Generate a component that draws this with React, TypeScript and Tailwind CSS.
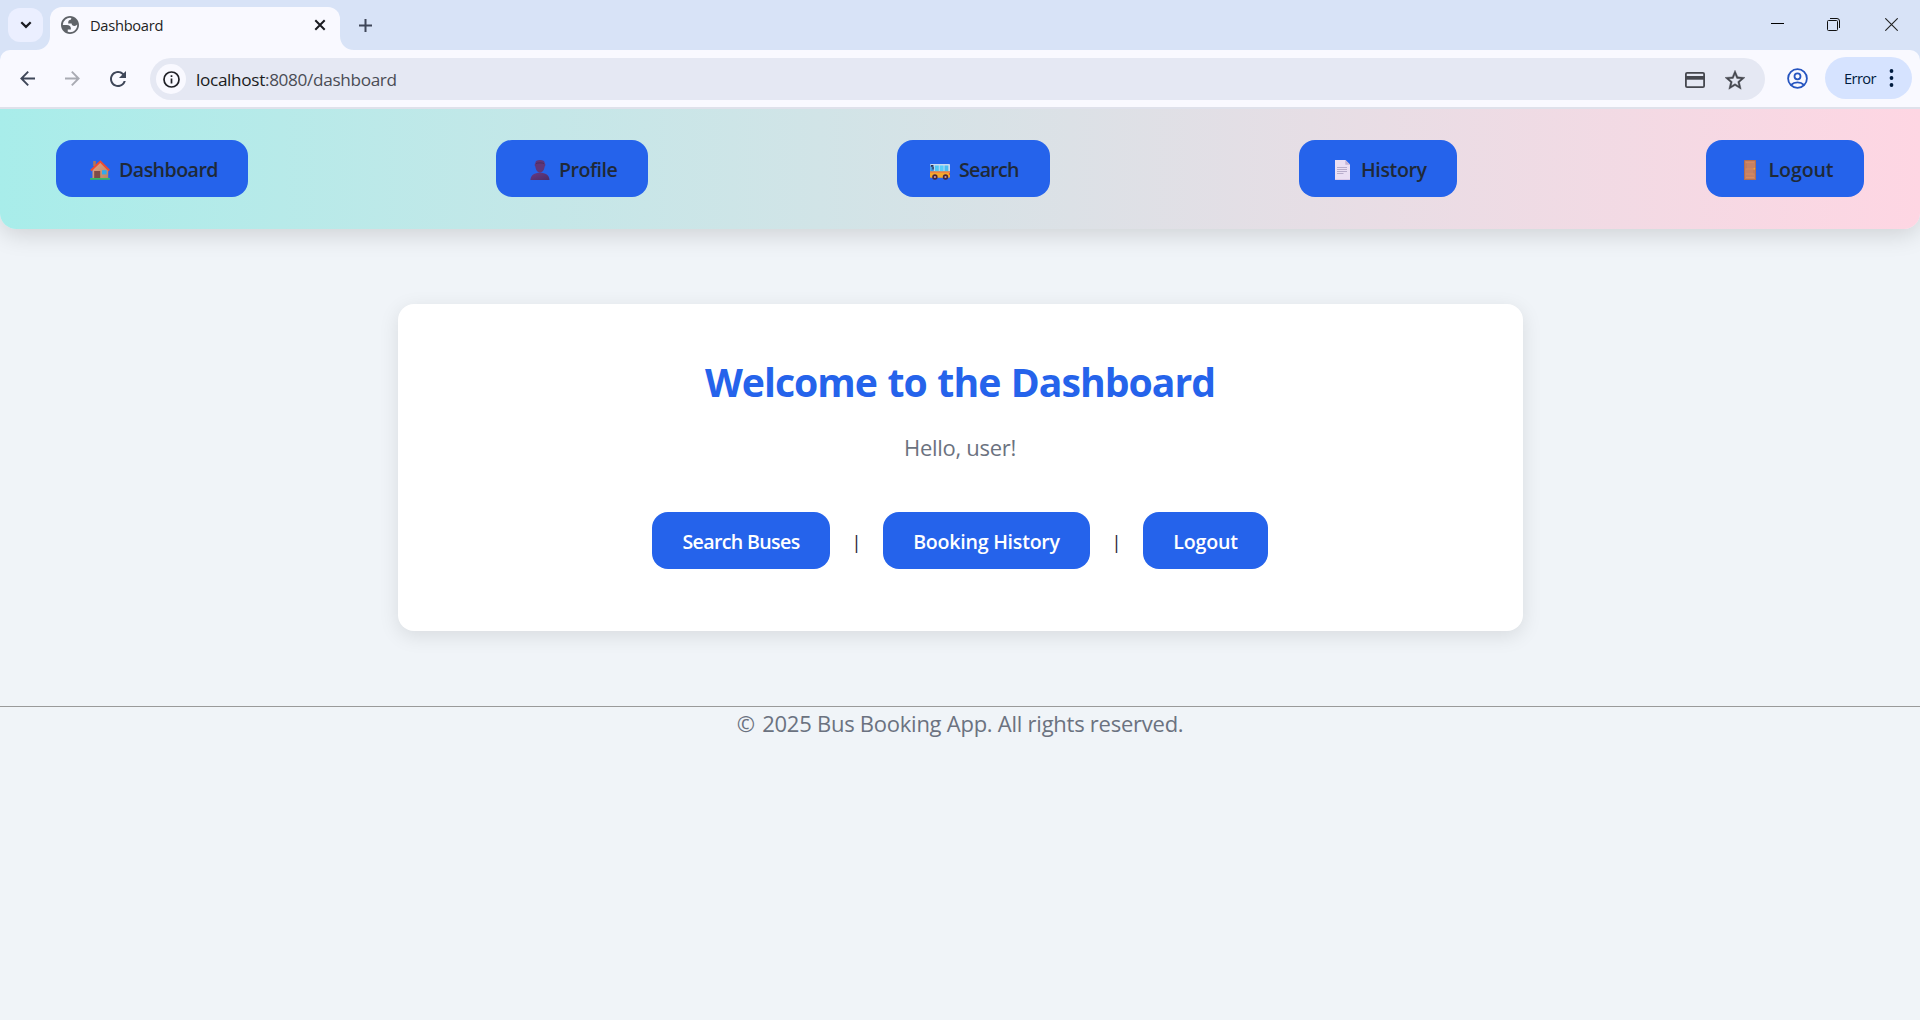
import type { ReactNode } from 'react';

const HouseIcon = () => (
  <svg width="20" height="20" viewBox="0 0 20 20">
    <defs>
      <linearGradient id="wall" x1="0" y1="0" x2="1" y2="1">
        <stop offset="0" stopColor="#e3a489" />
        <stop offset="1" stopColor="#b98560" />
      </linearGradient>
    </defs>
    <rect x="3.2" y="1" width="2.6" height="5" fill="#b0765a" />
    <path d="M2.5 9.5 10.3 2l7.9 7.8V18.6H2.5z" fill="url(#wall)" />
    <rect x="4.2" y="11" width="6" height="7.6" fill="#7d4c48" />
    <rect x="12" y="10.2" width="4.6" height="4.2" fill="#2fa9ee" />
    <path d="M0.9 10.5 10.3 1.5l9 9" fill="none" stroke="#f04b2f" strokeWidth="1.9" />
    <rect x="0" y="18" width="20" height="1.8" rx="0.6" fill="#35b862" />
  </svg>
);

const PersonIcon = () => (
  <svg width="20" height="20" viewBox="0 0 20 20">
    <defs>
      <linearGradient id="bust" x1="0" y1="0" x2="1" y2="1">
        <stop offset="0" stopColor="#673a83" />
        <stop offset="1" stopColor="#492b68" />
      </linearGradient>
    </defs>
    <path d="M5.3 3.6C5.4.9 7 .1 10 .1s4.7.8 4.8 3.5c.8.5.7 2.5-.2 3-.2 3.3-2.2 6.1-4.6 6.1S5.600 9.900 5.400 6.600c-.9-.5-.9-2.500-.1-3z" fill="#5f3679" />
    <path d="M.4 20c.3-4.700 4-7.200 9.600-7.200s9.200 2.500 9.500 7.200z" fill="url(#bust)" />
    <path d="M6 3.600c1.200-1 6.800-1 8 0" fill="none" stroke="#472b5f" strokeWidth="0.9" />
  </svg>
);

const BusIcon = () => (
  <svg width="20" height="20" viewBox="0 0 20 20">
    <path d="M1 3.900h18.200q.8 0 .8.800v6.500H0V4.900q0-1 1-1z" fill="#c9d9ee" />
    <rect x="0.200" y="5.500" width="3.600" height="6.500" fill="#3c9ae6" />
    <rect x="4.800" y="5.500" width="4" height="6" fill="#4fc6f7" />
    <rect x="9.700" y="5.500" width="3.900" height="6" fill="#57cdfb" />
    <rect x="14.500" y="5.500" width="3.800" height="6" fill="#4bbdf2" />
    <path d="M0 11.500h20V17q0 .800-.800.800H.800Q0 17.800 0 17z" fill="#f5a82d" />
    <path d="M0 11.500h20v1.400H0z" fill="#f38345" />
    <path d="M.900 4.900h2.400v1.800H.900zM2.400 7h1.300v2.600H2.400z" fill="#343352" />
    <circle cx="4.900" cy="17" r="2.700" fill="#45263f" />
    <circle cx="15.500" cy="17" r="2.700" fill="#45263f" />
    <circle cx="4.900" cy="17" r="1.100" fill="#b99bb8" />
    <circle cx="15.500" cy="17" r="1.100" fill="#b99bb8" />
    <rect x="19" y="13.200" width="1" height="1.600" fill="#d63d3d" />
  </svg>
);

const PageIcon = () => (
  <svg width="20" height="20" viewBox="0 0 20 20">
    <path d="M3 0h10.500L18 4.500V20H3z" fill="#eadff3" />
    <path d="M13.300 0 18 4.700h-4.700z" fill="#c4b3d3" />
    <path d="M5 7.500h10M5 9.500h10M5 11.500h10M5 13.500h6.500" stroke="#ab9fc0" strokeWidth="0.800" />
    <path d="M3 19.600h15" stroke="#d3c1e2" strokeWidth="0.800" />
  </svg>
);

const DoorIcon = () => (
  <svg width="20" height="20" viewBox="0 0 20 20">
    <rect x="4" y="0" width="12" height="20" rx="0.600" fill="#b46f50" />
    <rect x="5" y="1" width="10" height="18" fill="#c68163" />
    <path d="M6 2.300h8M6 9h7.500M6 14h8M6 17.500h8" stroke="#dd8d5b" strokeWidth="0.900" />
    <path d="M6 3.200v5M14 10v3.500" stroke="#b8734f" strokeWidth="0.600" />
    <circle cx="14.300" cy="8.700" r="0.900" fill="#f6a72b" />
  </svg>
);

const GlobeIcon = () => (
  <svg width="18" height="18" viewBox="2 2 20 20" fill="#5f6368" fillRule="evenodd">
    <path d="M12 2C6.480 2 2 6.480 2 12s4.480 10 10 10 10-4.480 10-10S17.520 2 12 2zM4 12h4.400c3.407.022 4.922 1.730 4.543 5.127H9.488v2.470a8.004 8.004 0 0 0 10.498-8.083C19.327 12.504 18.332 13 17 13c-2.137 0-3.206-.916-3.206-2.750h-3.748c-.274-2.728.683-4.092 2.870-4.092 0-.975.327-1.597.811-1.970A8.004 8.004 0 0 0 4 12z" />
  </svg>
);

const navItems: { label: string; icon: ReactNode; box: string; text: string }[] = [
  { label: 'Dashboard', icon: <HouseIcon />, box: 'w-48 pl-[34px]', text: 'ml-[9px] tracking-[-0.55px]' },
  { label: 'Profile', icon: <PersonIcon />, box: '-ml-px w-38 pl-[34px]', text: 'ml-[9px] tracking-[-0.5px]' },
  { label: 'Search', icon: <BusIcon />, box: 'w-[153px] pl-[33px]', text: 'ml-[9px] tracking-[-0.7px]' },
  { label: 'History', icon: <PageIcon />, box: 'w-[158px] pl-[33px]', text: 'ml-[9px] tracking-[-0.38px]' },
  { label: 'Logout', icon: <DoorIcon />, box: 'w-[158px] pl-[34px]', text: 'ml-[8.5px] tracking-[-0.1px]' },
];

function TabStrip() {
  return (
    <div className="flex h-[50px] bg-[#d8e3f7]">
      <div className="ml-2 mt-2 flex h-[34px] w-[35px] items-center justify-center rounded-xl bg-[#ebefff]">
        <svg width="12" height="8" viewBox="0 0 12 8" fill="none" stroke="#1a1b21" strokeWidth="2.200">
          <path d="M1.300 1.200 6 5.900l4.700-4.700" />
        </svg>
      </div>
      <svg className="ml-[-7px] mt-auto" width="14" height="14" viewBox="0 0 14 14" fill="#f9f9ff">
        <path d="M14 0v14H0C8 14 14 8 14 0z" />
      </svg>
      <div className="mt-[7px] flex h-[43px] w-[290px] items-center rounded-t-xl bg-[#f9f9ff] pb-[7px] pl-[11px] pr-[14px]">
        <GlobeIcon />
        <span className="ml-[11px] text-[14.7px] tracking-[-0.3px] text-[#1f1f24]">Dashboard</span>
        <svg className="ml-auto" width="12" height="12" viewBox="0 0 12 12" fill="none" stroke="#1a1b21" strokeWidth="2">
          <path d="M1.300 1.300l9.400 9.400M10.700 1.300l-9.400 9.400" />
        </svg>
      </div>
      <svg className="mt-auto" width="14" height="14" viewBox="0 0 14 14" fill="#f9f9ff">
        <path d="M0 0v14h14C6 14 0 8 0 0z" />
      </svg>
      <svg className="ml-[5px] mt-[19px]" width="13" height="13" viewBox="0 0 13 13" stroke="#3f4759" strokeWidth="2">
        <path d="M6.500 0v13M0 6.500h13" />
      </svg>
      <div className="ml-auto mr-[22px] mt-[18px] flex h-[13px]">
        <svg width="13" height="13" viewBox="0 0 13 13" stroke="#000">
          <path d="M0 5.500h13" />
        </svg>
        <svg className="ml-[43px]" width="13" height="13" viewBox="0 0 13 13" fill="none" stroke="#111">
          <rect x="0.500" y="2.500" width="10" height="10" rx="1" />
          <path d="M3 .500h7a2.500 2.500 0 0 1 2.500 2.500v7" />
        </svg>
        <svg className="ml-[45px]" width="13" height="13" viewBox="0 0 13 13" stroke="#222" strokeWidth="1.100">
          <path d="M.300.300l12.400 12.400M12.700.300.300 12.700" />
        </svg>
      </div>
    </div>
  );
}

function Toolbar() {
  return (
    <div className="relative z-10 bg-[#d8e3f7]">
      <div className="flex h-[59px] items-start rounded-t-[10px] border-b-2 border-[#dfe1eb] bg-[#f9f9ff]">
        <div className="ml-5 mt-[21px] flex">
          <svg width="15" height="15" viewBox="0 0 15 15" fill="none" stroke="#3f4759" strokeWidth="1.900">
            <path d="M15 7.500H1.500M8.200.700 1.400 7.500l6.800 6.800" />
          </svg>
          <svg className="ml-[30px]" width="15" height="15" viewBox="0 0 15 15" fill="none" stroke="#a9abb3" strokeWidth="1.900">
            <path d="M0 7.500h13.500M6.800.700l6.800 6.800-6.800 6.800" />
          </svg>
          <svg className="ml-[30px]" width="16" height="16" viewBox="4 4 16 16" fill="#3f4759">
            <path d="M17.650 6.350A7.958 7.958 0 0 0 12 4c-4.420 0-7.990 3.580-7.990 8s3.570 8 7.990 8c3.730 0 6.840-2.550 7.730-6h-2.080A5.990 5.990 0 0 1 12 18c-3.310 0-6-2.690-6-6s2.690-6 6-6c1.660 0 3.140.690 4.220 1.780L13 11h7V4l-2.350 2.350z" />
          </svg>
        </div>
        <div className="ml-6 mt-2 flex h-[42px] w-[1615px] items-center rounded-full bg-[#e5e8f3] pl-1.5 pr-5">
          <div className="flex size-[30px] items-center justify-center rounded-full bg-[#f9f9ff]">
            <svg width="17" height="17" viewBox="0 0 17 17" fill="none" stroke="#1f2026" strokeWidth="1.700">
              <circle cx="8.500" cy="8.500" r="7.500" />
              <path d="M8.500 7.600v4.900M8.500 4.300v1.800" />
            </svg>
          </div>
          <span className="ml-[10px] pt-0.5 text-[17.2px] tracking-[-0.34px] text-[#4a4c55]">
            <span className="text-[#1a1b21]">localhost</span>:8080/dashboard
          </span>
          <svg className="ml-auto mt-[2px]" width="20" height="16" viewBox="0 0 20 16">
            <rect x="0.900" y="0.900" width="18.200" height="14.200" rx="1.200" fill="none" stroke="#45474e" strokeWidth="1.800" />
            <rect x="1" y="4" width="18" height="3.700" fill="#45474e" />
          </svg>
          <svg className="ml-5 mt-px" width="20" height="20" viewBox="2 2 20 19.500" fill="#45474e" stroke="#45474e" strokeWidth="0.400">
            <path d="M22 9.240l-7.190-.620L12 2 9.190 8.630 2 9.240l5.460 4.730L5.820 21 12 17.270 18.180 21l-1.630-7.030L22 9.240zM12 15.400l-3.760 2.270 1-4.280-3.320-2.880 4.380-.380L12 6.100l1.710 4.040 4.380.380-3.320 2.880 1 4.280L12 15.400z" />
          </svg>
        </div>
        <svg className="ml-[22px] mt-[18px]" width="21" height="21" viewBox="0 0 21 21" fill="none" stroke="#2655c0" strokeWidth="1.800">
          <circle cx="10.500" cy="10.500" r="9.400" />
          <circle cx="10.500" cy="8.300" r="3" />
          <path d="M4 17c1.700-1.700 4-2.600 6.500-2.600s4.800.900 6.500 2.600" />
        </svg>
        <div className="ml-[17px] mt-[7px] flex h-[42px] w-[87px] items-center rounded-full bg-[#d6e3ff] pl-[19px]">
          <span className="text-[14.7px] tracking-[-0.6px] text-[#001b3e]">Error</span>
          <svg className="ml-auto mr-[18px]" width="5" height="18" viewBox="0 0 5 18" fill="#001b3e">
            <circle cx="2.500" cy="2" r="1.900" />
            <circle cx="2.500" cy="9" r="1.900" />
            <circle cx="2.500" cy="16" r="1.900" />
          </svg>
        </div>
      </div>
    </div>
  );
}

function ActionButton({ box, children }: { box: string; children: ReactNode }) {
  return (
    <button className={`h-[57px] shrink-0 whitespace-nowrap rounded-2xl bg-[#2563eb] pt-[3px] text-center text-[19.6px] font-semibold text-white ${box}`}>
      {children}
    </button>
  );
}

const Separator = () => <span className="w-[53px] pt-[3px] text-center text-[19px] text-[#1f2937]">|</span>;

export default function App() {
  return (
    <div className="h-[1020px] w-[1920px] overflow-hidden bg-[#f0f4f8] font-['Open_Sans','Noto_Sans',sans-serif]">
      <TabStrip />
      <Toolbar />
      <nav className="flex h-[120px] items-start gap-[249px] rounded-b-2xl bg-linear-to-r from-[#a8edea] to-[#fed6e3] px-14 pt-[31px] shadow-[0_5px_25px_rgba(0,0,0,0.15)]">
        {navItems.map((item) => (
          <a key={item.label} className={`flex h-[57px] shrink-0 items-center rounded-2xl bg-[#2563eb] ${item.box}`}>
            <span className="-mb-[3px] shrink-0">{item.icon}</span>
            <span className={`pt-0.5 text-[19.6px] font-semibold text-[#1f2937] ${item.text}`}>{item.label}</span>
          </a>
        ))}
      </nav>
      <main className="mx-auto mt-[75px] h-[327px] w-[1125px] rounded-2xl bg-white pt-[53px] text-center shadow-[0_5px_20px_rgba(0,0,0,0.1)]">
        <h1 className="text-[39.2px] font-bold leading-[50px] tracking-[-1px] text-[#2563eb] [word-spacing:1.4px]">Welcome to the Dashboard</h1>
        <p className="mt-[25px] text-[22px] leading-[30px] tracking-[-0.28px] text-[#6b7280]">Hello, user!</p>
        <div className="mt-[50px] flex items-center justify-center">
          <ActionButton box="w-[178px] tracking-[-0.65px]">Search Buses</ActionButton>
          <Separator />
          <ActionButton box="w-[207px] tracking-[-0.24px]">Booking History</ActionButton>
          <Separator />
          <ActionButton box="w-[125px] tracking-[-0.16px]">Logout</ActionButton>
        </div>
      </main>
      <footer className="mt-[75px] border-t border-[#9a9a9a] pt-px text-center text-[22px] leading-[30px] tracking-[-0.25px] text-[#6b7280]">
        <span className="mr-0.5">©</span> 2025 Bus Booking App. All rights reserved.
      </footer>
    </div>
  );
}
